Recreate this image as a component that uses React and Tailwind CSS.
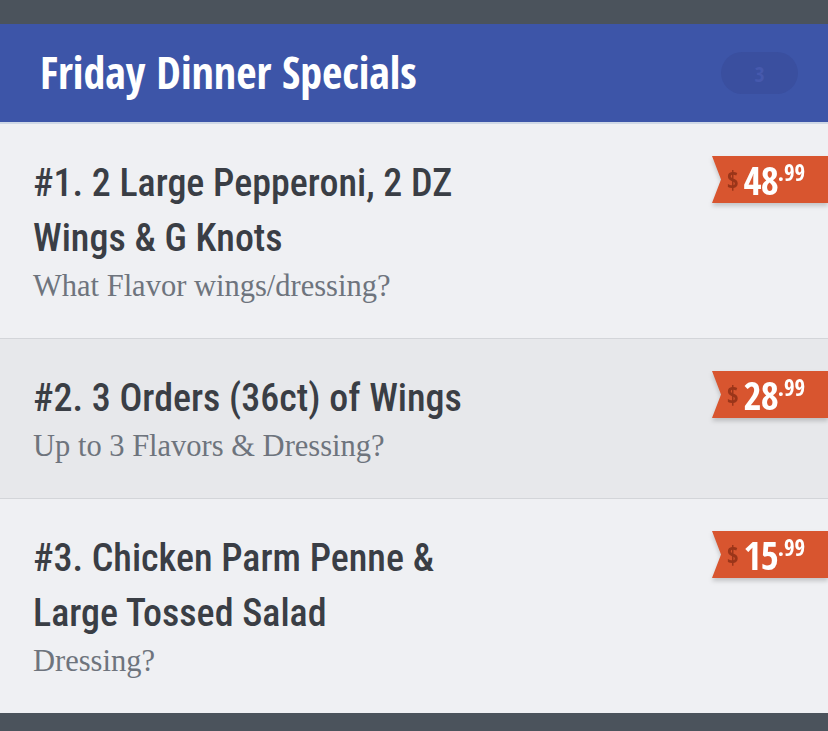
const items = [
  {
    id: 1,
    title: ["#1. 2 Large Pepperoni, 2 DZ", "Wings & G Knots"],
    note: "What Flavor wings/dressing?",
    dollars: "48",
    cents: "99",
    bg: "bg-[#eff0f3]",
  },
  {
    id: 2,
    title: ["#2. 3 Orders (36ct) of Wings"],
    note: "Up to 3 Flavors & Dressing?",
    dollars: "28",
    cents: "99",
    bg: "bg-[#e7e8eb]",
  },
  {
    id: 3,
    title: ["#3. Chicken Parm Penne &", "Large Tossed Salad"],
    note: "Dressing?",
    dollars: "15",
    cents: "99",
    bg: "bg-[#eff0f3]",
  },
];

const condensed = { fontFamily: "'Open Sans Condensed', 'Roboto Condensed', sans-serif" };
const titleFont = { fontFamily: "'Roboto Condensed', 'Open Sans Condensed', sans-serif" };
const serif = { fontFamily: "'Liberation Serif', 'DejaVu Serif', serif" };

// Ribbon price tag, notched on the left
const PriceTag = ({ dollars, cents }) => (
  <div className="drop-shadow-[0_3px_2px_rgba(0,0,0,0.18)]">
    <div
      className="w-[116px] h-[47px] bg-[#d8552f] flex items-center pl-[15px] [clip-path:polygon(0_0,100%_0,100%_100%,0_100%,9px_50%)]"
      style={condensed}
    >
      <span className="text-[25px] font-bold text-[#9a3519] mr-[5px] leading-none">$</span>
      <span className="text-[39px] font-bold text-white leading-none tracking-[-1px]">{dollars}</span>
      <span className="text-[23px] font-bold text-white leading-none self-start mt-[5px]">.{cents}</span>
    </div>
  </div>
);

export default function App() {
  return (
    <div className="w-[828px] h-[731px] bg-[#4b535c] flex flex-col overflow-hidden">
      <div className="h-[24px] shrink-0" />
      <header className="h-[100px] shrink-0 bg-[#3d55a8] border-b-2 border-[#cfd8e6] flex items-center justify-between pl-[40px] pr-[30px]">
        <h1 className="text-[44px] font-bold text-white leading-none -mt-[2px]" style={condensed}>
          Friday Dinner Specials
        </h1>
        <div className="w-[77px] h-[42px] rounded-full bg-[#3a4f9f] flex items-center justify-center text-[22px] font-bold text-[#4659ad]" style={condensed}>
          3
        </div>
      </header>
      {items.map((it, i) => (
        <div
          key={it.id}
          className={`${it.bg} ${i < items.length - 1 ? "border-b border-[#d3d5d9]" : ""} flex justify-between pt-[32px] pb-[34px] pl-[33px]`}
        >
          <div>
            <div className="text-[38px] font-medium text-[#3a3e45] leading-[55px]" style={titleFont}>
              {it.title.map((t) => (
                <div key={t}>{t}</div>
              ))}
            </div>
            <div className="text-[30.5px] text-[#6e747d] leading-[36px] mt-[2px]" style={serif}>
              {it.note}
            </div>
          </div>
          <PriceTag dollars={it.dollars} cents={it.cents} />
        </div>
      ))}
    </div>
  );
}
